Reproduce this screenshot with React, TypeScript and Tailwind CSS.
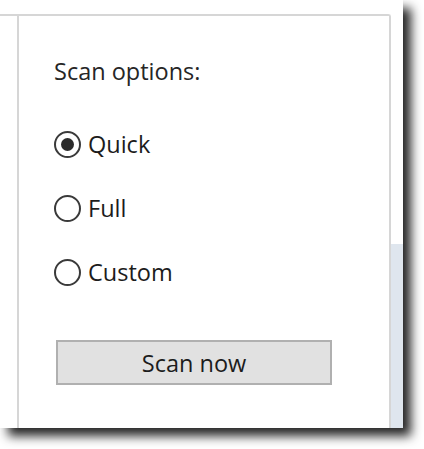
import React from "react";

function Radio({ checked, label }: { checked?: boolean; label: string }) {
  return (
    <div className="flex items-center h-[32px]">
      <div className="w-[27px] h-[27px] rounded-full border-2 border-[#3a3a3a] bg-white flex items-center justify-center shrink-0">
        {checked && <div className="w-[13px] h-[13px] rounded-full bg-[#2b2b2b]" />}
      </div>
      <span className="ml-[7px] text-[23.5px] leading-[32px] text-[#1c1c1c]">{label}</span>
    </div>
  );
}

export default function App() {
  return (
    <div
      className="w-[424px] h-[449px] bg-white overflow-hidden"
      style={{ fontFamily: '"Open Sans", "Noto Sans", sans-serif' }}
    >
      <div className="w-[403px] h-[428px] bg-white flex flex-col shadow-[8px_8px_10px_rgba(0,0,0,0.85)]">
        <div className="h-[14px] shrink-0" />
        <div className="flex flex-1">
          <div className="w-[17px] border-t-2 border-[#d6d6d6] shrink-0" />
          <div className="flex-1 border-t-2 border-l-2 border-r-2 border-[#d6d6d6] rounded-tr-[3px] pl-[35px] pt-[39px] flex flex-col">
            <div className="text-[23.5px] leading-[32px] text-[#262626]">Scan options:</div>
            <div className="mt-[41px] flex flex-col gap-[32px]">
              <Radio checked label="Quick" />
              <Radio label="Full" />
              <Radio label="Custom" />
            </div>
            <button className="mt-[52px] ml-[2px] w-[276px] h-[45px] bg-[#e1e1e1] border-2 border-[#b0b0b0] text-[23.5px] leading-[32px] text-[#1c1c1c] flex items-center justify-center">
              Scan now
            </button>
          </div>
          <div className="w-[12px] flex flex-col shrink-0">
            <div className="h-[230px]" />
            <div className="flex-1 bg-[#dfe6ee]" />
          </div>
        </div>
      </div>
    </div>
  );
}
